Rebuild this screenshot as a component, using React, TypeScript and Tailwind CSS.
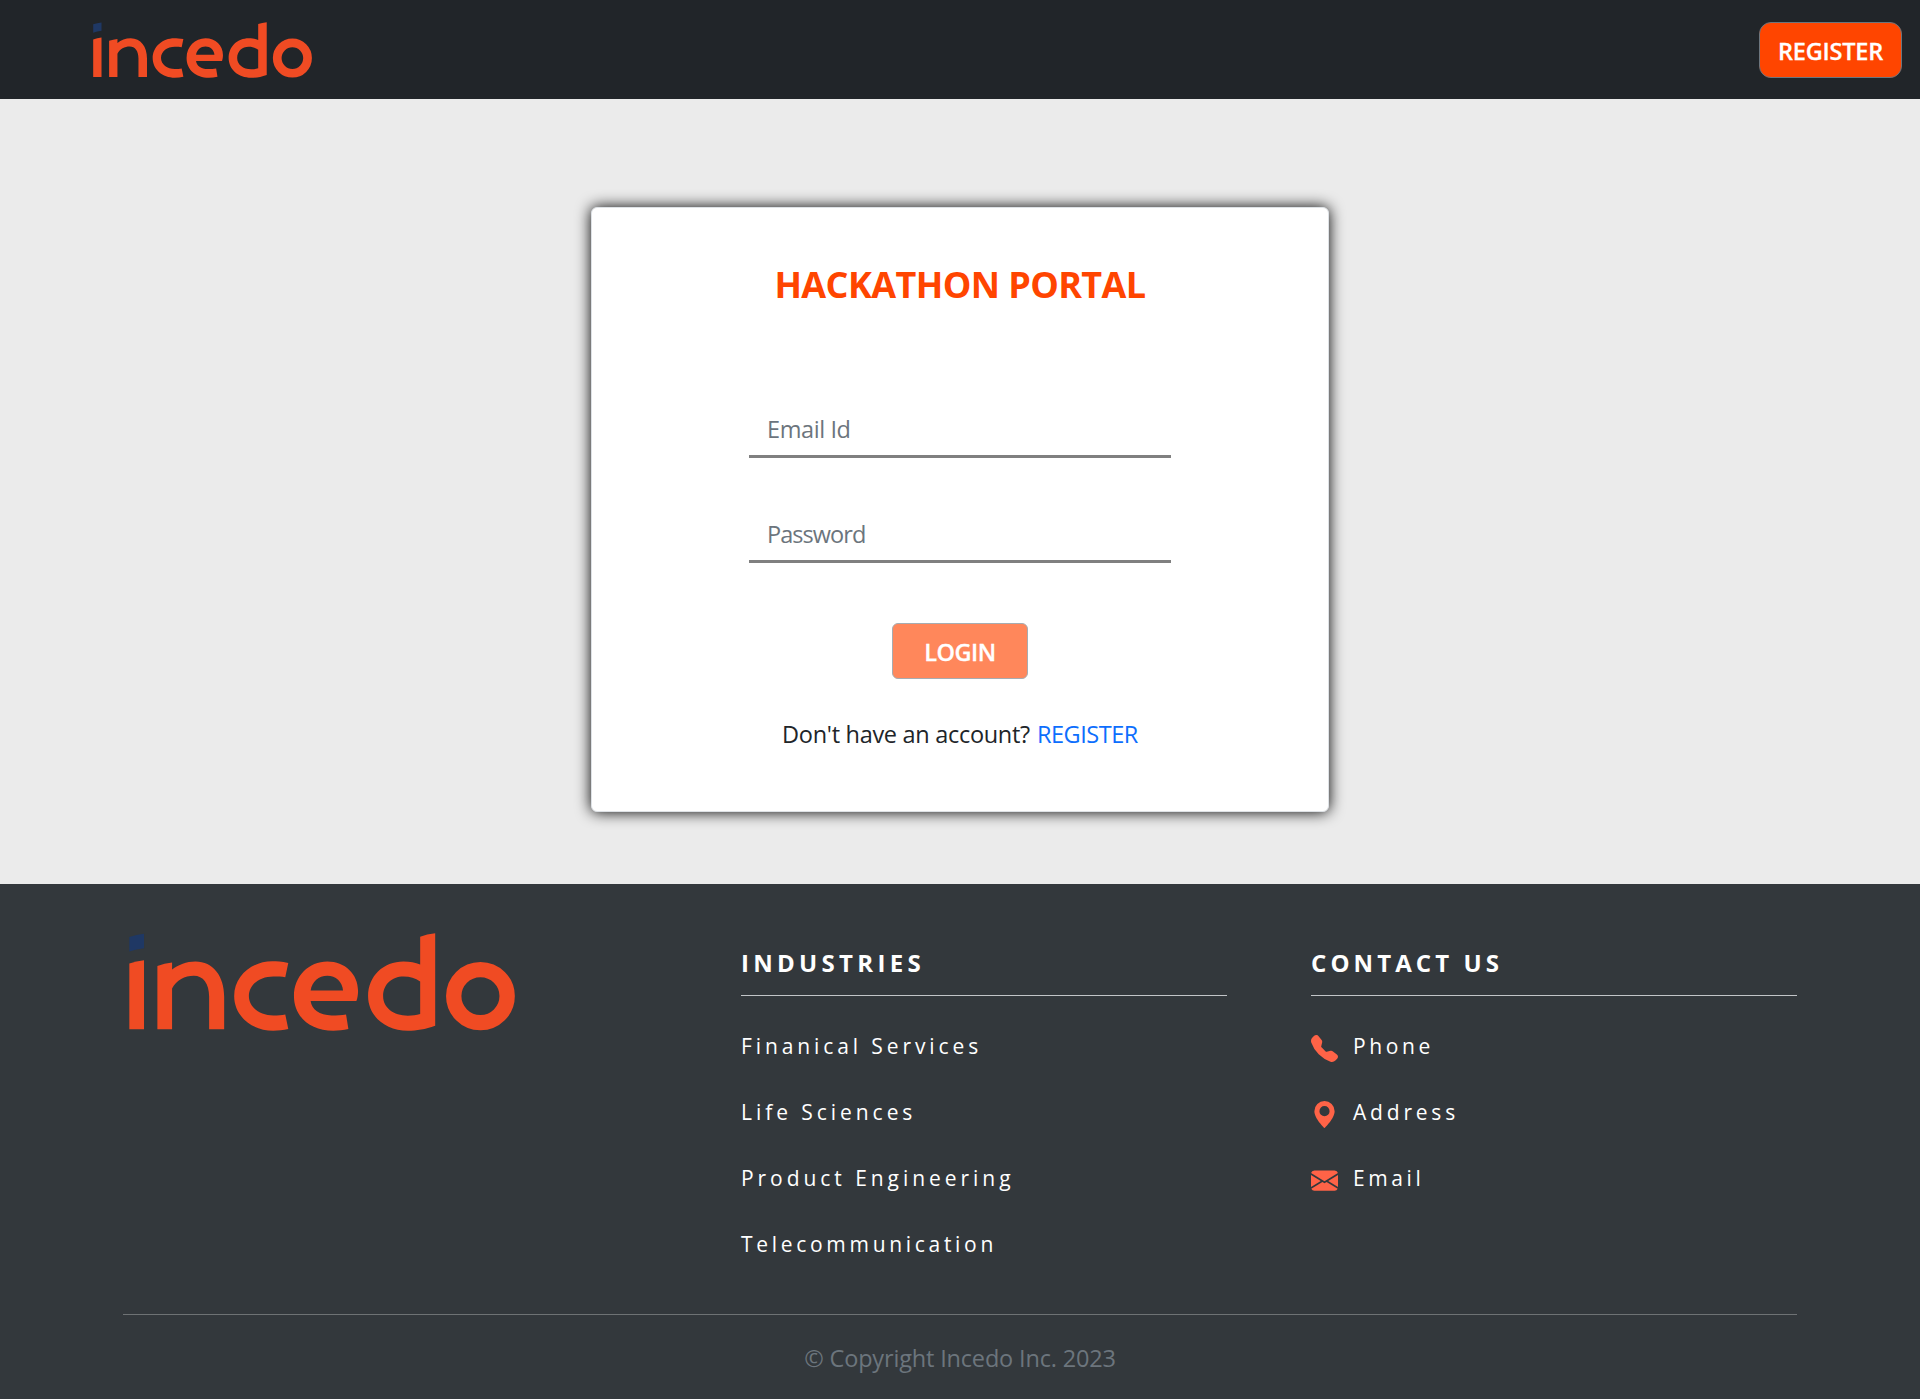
import React from "react";
import { BsTelephoneFill, BsGeoAltFill, BsEnvelopeFill } from "react-icons/bs";

function Logo({ className }: { className: string }) {
  return (
    <svg viewBox="58 188 1156 295" preserveAspectRatio="none" className={className} role="img" aria-label="incedo">
      <path fill="#1f3864" d="M59 200Q80 193 103 190V234Q80 237 59 244Z" />
      <g fill="#f04b23" fillRule="evenodd">
        <path d="M59 280Q80 273 103 270V478H59Z" />
        <path d="M143 287Q164 280 187 277V298C206 284 230 274 257 274C310 274 343 318 343 380V478H298V380C298 340 280 317 252 317C225 317 200 330 187 355V478H143Z" />
        <path d="M535 278C515 274 500 273 487 273C425 273 373 318 373 378C373 438 425 482 490 482C505 482 520 481 535 477L526 433C515 436 505 436 490 436C450 436 417 412 417 378C417 343 450 319 490 319C505 319 515 319 526 321Z" />
        <path d="M739 393H602C605 418 628 436 665 436C680 436 695 436 708 433L715 477C700 481 685 482 670 482C600 482 552 440 552 378C552 318 597 274 652 274C705 274 744 312 744 362C744 375 742 385 739 393ZM602 361H699C697 335 677 317 652 317C626 317 606 335 602 361Z" />
        <path d="M930 199Q950 191 975 189V467C945 478 920 482 893 482C825 482 774 438 774 378C774 318 820 274 880 274C900 274 915 277 930 283ZM930 334C915 324 900 319 880 319C845 319 819 343 819 378C819 413 850 437 893 437C908 437 918 436 930 432Z" />
      </g>
      <circle cx="1110.5" cy="378" r="80" fill="none" stroke="#f04b23" strokeWidth="46" />
    </svg>
  );
}

const industries = [
  { name: "Finanical Services", tracking: "tracking-[3.9px]" },
  { name: "Life Sciences", tracking: "tracking-[3.95px]" },
  { name: "Product Engineering", tracking: "tracking-[3.95px]" },
  { name: "Telecommunication", tracking: "tracking-[3.7px]" },
];

const contacts = [
  { name: "Phone", Icon: BsTelephoneFill, tracking: "tracking-[3.6px]" },
  { name: "Address", Icon: BsGeoAltFill, tracking: "tracking-[3.8px]" },
  { name: "Email", Icon: BsEnvelopeFill, tracking: "tracking-[3.6px]" },
];

export default function App() {
  return (
    <div className="flex h-[1399px] w-full flex-col overflow-hidden bg-[#ebebeb] font-['Open_Sans',sans-serif] text-[24px] leading-9 text-[#212529]">
      <header className="flex h-[99px] shrink-0 items-start justify-between bg-[#212529] pt-[22px] pr-[18px] pl-[93px]">
        <Logo className="h-14 w-[219px]" />
        <button className="h-14 w-[143px] rounded-xl border border-[#6c757d] bg-[#ff4500] pt-0.5 text-[23.5px] font-semibold tracking-[-0.2px] whitespace-nowrap text-white [-webkit-text-stroke:0.3px_#fff]">
          REGISTER
        </button>
      </header>

      <main className="flex h-[785px] shrink-0 justify-center pt-[108px]">
        <form className="flex h-[605px] w-[738px] flex-col items-center rounded-md border border-[#dee2e6] bg-white pt-[50px] shadow-[0_0_15px_#000]">
          <h1 className="text-[36px] leading-[54px] font-bold tracking-[-0.6px] text-[#ff4500]">HACKATHON PORTAL</h1>
          <input
            type="text"
            placeholder="Email Id"
            className="mt-[89px] h-[57px] w-[422px] border-b-[3px] border-[#808080] px-[18px] pt-[10px] pb-2 text-[23.5px] tracking-[-0.4px] outline-none placeholder:text-[#6c757d]"
          />
          <input
            type="password"
            placeholder="Password"
            className="mt-12 h-[57px] w-[422px] border-b-[3px] border-[#808080] px-[18px] pt-[10px] pb-2 text-[23.5px] tracking-[-0.95px] outline-none placeholder:text-[#6c757d]"
          />
          <button
            type="button"
            className="mt-[60px] h-14 w-[136px] rounded-md border border-[#a6acb1] bg-[#ff875b] pt-0.5 text-[23.5px] font-semibold tracking-[-0.5px] text-white [-webkit-text-stroke:0.3px_#fff]"
          >
            LOGIN
          </button>
          <p className="mt-[37px] flex gap-[7px] text-[23.5px] whitespace-nowrap">
            <span className="tracking-[-0.3px]">Don't have an account?</span>
            <a className="tracking-[-0.45px] text-[#0d6efd]">REGISTER</a>
          </p>
        </form>
      </main>

      <footer className="h-[515px] shrink-0 bg-[#33383c] px-[123px] text-white">
        <div className="grid grid-cols-[534px_486px_486px] gap-x-[84px]">
          <div className="pt-[49px] pl-[6px]">
            <Logo className="h-[98px] w-[386px]" />
          </div>
          <section className="pt-[61px]">
            <h2 className="font-bold tracking-[4.3px]">INDUSTRIES</h2>
            <hr className="mt-[14px] border-[#c2c5c8]" />
            <ul className="mt-[34px] flex flex-col gap-[33px] text-[21px] leading-[33px]">
              {industries.map(({ name, tracking }) => (
                <li key={name} className={tracking}>{name}</li>
              ))}
            </ul>
          </section>
          <section className="pt-[61px]">
            <h2 className="font-bold tracking-[4.1px]">CONTACT US</h2>
            <hr className="mt-[14px] border-[#c2c5c8]" />
            <ul className="mt-[34px] flex flex-col gap-[33px] text-[21px] leading-[33px]">
              {contacts.map(({ name, Icon, tracking }) => (
                <li key={name} className="flex h-[33px] items-start">
                  <Icon className="mt-[5px] mr-[15px] size-[27px] text-[#ff6347]" />
                  <span className={tracking}>{name}</span>
                </li>
              ))}
            </ul>
          </section>
        </div>
        <hr className="mt-[53px] border-[#6e7274]" />
        <p className="mt-[25px] text-center text-[23.5px] tracking-[-0.17px] text-[#6c757d]">© Copyright Incedo Inc. 2023</p>
      </footer>
    </div>
  );
}
